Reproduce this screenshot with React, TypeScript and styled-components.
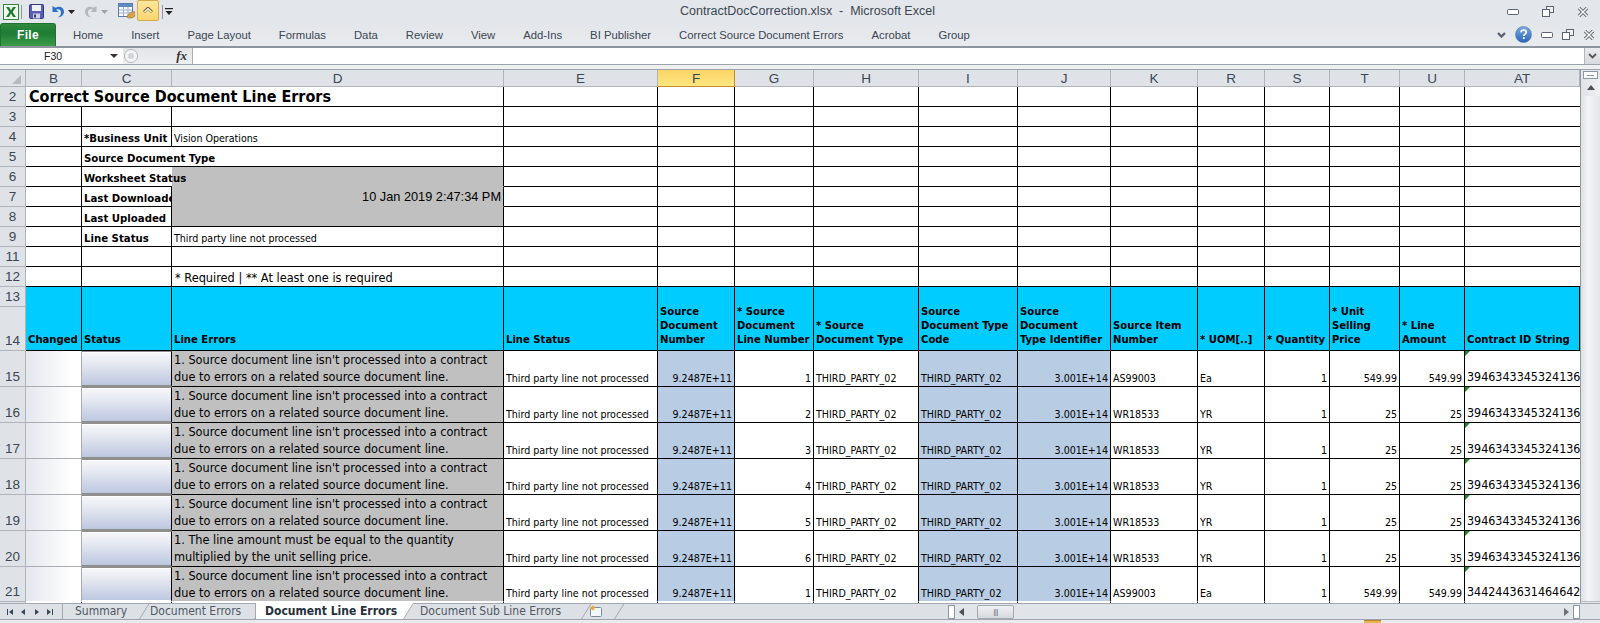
import React from "react";
import styled, { createGlobalStyle } from "styled-components";

const SANS = `"DejaVu Sans Condensed", "Liberation Sans", sans-serif`;
const ARIAL = `"Liberation Sans", Arial, sans-serif`;

const Global = createGlobalStyle`
  html, body { margin: 0; padding: 0; height: 623px; overflow: hidden; background: #e4e7eb; }
  * { box-sizing: border-box; }
`;

const Page = styled.div`
  width: 1600px; height: 623px; display: flex; flex-direction: column; overflow: hidden;
  font-family: ${ARIAL}; color: #000;
`;
const TitleBar = styled.div`
  height: 23px; flex: none; display: flex; align-items: center; position: relative;
  background: #e3e6ea;
`;
const Quick = styled.div`
  display: flex; align-items: center; height: 23px; padding-left: 2px;
`;
const QuickSlot = styled.span<{ $w: number }>`
  width: ${(p) => p.$w}px; height: 23px; display: flex; align-items: center; justify-content: center; flex: none;
`;
const Active = styled.span`
  width: 22px; height: 21px; margin-top: -2px; display: flex; align-items: center; justify-content: center; flex: none;
  border: 1px solid #d9a94a; border-radius: 2px; background: linear-gradient(#fde79c, #fdd66c);
`;
const QSep = styled.span`
  width: 1px; height: 14px; background: #8f979f; flex: none;
`;
const WindowTitle = styled.div`
  position: absolute; left: 680px; top: 4px; font-size: 12.5px; line-height: 15px; color: #3b4654; white-space: pre;
`;
const WindowBtns = styled.div<{ $gap: number }>`
  margin-left: auto; display: flex; align-items: center; gap: ${(p) => p.$gap}px;
`;
const TopControls = styled(WindowBtns)`
  padding-right: 11px;
`;
const RibbonTabs = styled.div`
  height: 25px; flex: none; display: flex; align-items: stretch;
  background: linear-gradient(#e3e6ea, #e9ebee);
  border-bottom: 2px solid #8d969e;
`;
const FileTab = styled.div`
  width: 56px; height: 23px; flex: none; display: flex; align-items: center; justify-content: center;
  color: #fff; font-size: 12px; font-weight: 700; letter-spacing: 0.3px;
  border-radius: 3px 3px 0 0; border: 1px solid #1d7230; border-bottom: none;
  background: linear-gradient(#2f8a3f, #1e7b33 40%, #3b9c4a);
`;
const TabList = styled.div`
  display: flex; align-items: center; padding-left: 17px; gap: 28px; height: 23px;
`;
const Tab = styled.span`
  font-size: 11.3px; color: #3b4654; white-space: nowrap;
`;
const RibbonRight = styled.div`
  margin-left: auto; display: flex; align-items: center; height: 23px; padding-right: 5px; gap: 9px;
`;
const FormulaBar = styled.div`
  height: 17px; flex: none; display: flex; align-items: stretch; background: #fff;
  border-bottom: 1px solid #9da3aa;
`;
const NameBox = styled.div`
  width: 123px; flex: none; display: flex; align-items: center; padding-left: 44px; font-size: 10.5px; color: #222; position: relative;
`;
const NameArrow = styled.span`
  margin-left: auto; margin-right: 5px; width: 0; height: 0;
  border-left: 4px solid transparent; border-right: 4px solid transparent; border-top: 4px solid #333;
`;
const FxBox = styled.div`
  width: 70px; flex: none; display: flex; align-items: center; background: linear-gradient(#e3e5e9, #eceef1);
  border-right: 1px solid #a9aeb5; position: relative;
`;
const FxRound = styled.span`
  width: 14px; height: 14px; margin-left: 1px; border-radius: 50%; border: 1px solid #b4b8be;
  background: radial-gradient(circle, #d4d6da 35%, #f3f4f6 40%);
`;
const FxText = styled.span`
  margin-left: auto; margin-right: 5px; font-family: "Liberation Serif", serif; font-style: italic; font-weight: 700; font-size: 13px; color: #333;
`;
const FormulaInput = styled.div`
  flex: 1;
`;
const FormulaExpand = styled.div`
  width: 16px; flex: none; display: flex; align-items: center; justify-content: center;
  background: linear-gradient(#e9ebee, #d7dade); border-left: 1px solid #b0b5bb;
`;
const Spacer = styled.div`
  height: 5px; flex: none; background: #eef0f2; border-bottom: 1px solid #9da3aa;
`;
const Work = styled.div`
  height: 533px; flex: none; display: flex; overflow: hidden;
`;
const Sheet = styled.div`
  width: 1580px; flex: none; display: grid; overflow: hidden; background: #fff;
  grid-template-columns: 26px 56px 90px 332px 154px 77px 79px 105px 99px 93px 87px 67px 65px 70px 65px 115px;
  grid-template-rows: 17px 20px repeat(10, 20px) 44px repeat(6, 36px) 35px 20px;
  align-content: start;
`;
const Corner = styled.div`
  background: #dfe3e8; border-right: 1px solid #b1b5bb; border-bottom: 1px solid #b1b5bb;
  display: flex; align-items: flex-end; justify-content: flex-end; padding: 0 4px 2px 0;
`;
const ColHead = styled.div<{ $on?: boolean }>`
  display: flex; align-items: center; justify-content: center; font-size: 13.5px; color: #3a4656;
  border-right: 1px solid ${(p) => (p.$on ? "#c58b2f" : "#b1b5bb")};
  border-bottom: 1px solid ${(p) => (p.$on ? "#c58b2f" : "#b1b5bb")};
  background: ${(p) => (p.$on ? "linear-gradient(#fbd566, #ffe680)" : "#dfe3e8")};
`;
const RowHead = styled.div`
  display: flex; align-items: flex-end; justify-content: center; font-size: 13.5px; color: #3a4656; line-height: 18px;
  background: #dfe3e8; border-right: 1px solid #b1b5bb; border-bottom: 1px solid #b1b5bb;
`;
const Cell = styled.div<{ $end?: boolean; $nr?: boolean; $bg?: string; $span?: number; $lineB?: string }>`
  display: flex; align-items: flex-end; padding: 0 2px; position: relative; white-space: nowrap; min-width: 0;
  justify-content: ${(p) => (p.$end ? "flex-end" : "flex-start")};
  background: ${(p) => p.$bg ?? "#fff"};
  border-right: ${(p) => (p.$nr ? "none" : "1px solid #000")};
  border-bottom: 1px solid ${(p) => p.$lineB ?? "#000"};
  ${(p) => (p.$span ? `grid-column: span ${p.$span};` : "")}
`;
const Label = styled(Cell)<{ $over?: boolean }>`
  font-family: ${SANS}; font-size: 11.3px; font-weight: 700; line-height: 15px; padding-left: 2px; padding-bottom: 0;
  overflow: ${(p) => (p.$over ? "visible" : "hidden")}; z-index: ${(p) => (p.$over ? 1 : 0)};
`;
const Small = styled(Cell)`
  font-family: ${SANS}; font-size: 10.6px; line-height: 15px; padding-bottom: 0;
  overflow: hidden;
`;
const Title = styled(Cell)`
  font-family: ${SANS}; font-size: 16px; font-weight: 700; line-height: 19px; padding-left: 3px; align-items: flex-end;
`;
const Note = styled(Cell)`
  font-family: ${SANS}; font-size: 12.65px; padding-left: 3px; line-height: 17px;
`;
const Stamp = styled(Cell)`
  font-size: 12.75px; line-height: 18px;
`;
const HeadCell = styled(Cell)`
  grid-row: span 2; background: #00ccff; font-family: ${SANS}; font-size: 11.2px; font-weight: 700;
  line-height: 14px; white-space: pre-line; padding: 0 2px 3px 2px;
`;
const ChangedCell = styled(Cell)`
  background: linear-gradient(90deg, #e5e7ee, #fff 85%);
  border-right: 1px solid #a9adb3; border-bottom: 1px solid ${(p) => p.$lineB ?? "#a9adb3"};
`;
const StatusCell = styled(Cell)`
  padding: 0; border-top: 1px solid #8f8f8f; border-bottom: 2px solid ${(p) => p.$lineB ?? "#8f8f8f"};
  background: linear-gradient(#f8f8fb, #e6e9f1 35%, #bcc7e0);
  box-shadow: inset 0 1px 0 #fff;
`;
const ErrorCell = styled(Cell)`
  background: #c0c0c0; font-family: ${SANS}; font-size: 12.6px; line-height: 17px; white-space: pre-line;
  align-items: flex-start; padding-top: 0;
`;
const IdCell = styled(Cell)`
  font-family: ${SANS}; font-size: 12.4px; line-height: 18px; overflow: hidden; border-right: none; padding-left: 2px;
`;
const Flag = styled.span`
  position: absolute; left: 0; top: 0; width: 0; height: 0;
  border-top: 5px solid #178a1c; border-right: 5px solid transparent;
`;
const VScroll = styled.div`
  width: 20px; flex: none; display: flex; flex-direction: column; align-items: stretch;
  background: #e4e7eb; border-left: 1px solid #9299a1;
`;
const SplitV = styled.div`
  height: 8px; margin: 1px 2px 0; flex: none; background: #fff; border: 1px solid #8f969d;
  display: flex; align-items: center; justify-content: center;
`;
const SplitDash = styled.span`
  width: 7px; height: 1px; background: #8f969d;
`;
const ArrowBtn = styled.div`
  height: 17px; flex: none; display: flex; align-items: center; justify-content: center;
  background: linear-gradient(90deg, #dfe2e7, #eef0f3);
`;
const Up = styled.span`
  width: 0; height: 0; border-left: 4px solid transparent; border-right: 4px solid transparent; border-bottom: 5px solid #4a5056;
`;
const VThumb = styled.div`
  flex: 1; margin-bottom: 1px; background: linear-gradient(90deg, #dde0e6, #f3f4f6 40%, #e3e5ea);
  border-bottom: 1px solid #b9bdc3;
`;
const TabStrip = styled.div`
  height: 17px; flex: none; display: flex; align-items: stretch; background: #dde0e5; border-top: 1px solid #a3a9b0;
  border-bottom: 1px solid #9ea4ab;
`;
const Nav = styled.div`
  width: 63px; flex: none; display: flex; align-items: center; justify-content: space-around; padding: 0 5px 0 3px; color: #3a4656;
  border-right: 1px solid #a3a9b0;
`;
const SheetTabs = styled.div`
  width: 885px; flex: none; display: flex; align-items: stretch; margin-top: -1px;
`;
const SheetTab = styled.span<{ $on?: boolean; $w: number; $pad: number }>`
  width: ${(p) => p.$w}px; flex: none; padding-left: ${(p) => p.$pad}px; display: flex; align-items: center; position: relative;
  font-family: ${SANS}; font-size: 12px; white-space: nowrap;
  font-weight: ${(p) => (p.$on ? 700 : 400)}; color: ${(p) => (p.$on ? "#26303c" : "#4e5965")};
  background: ${(p) => (p.$on ? "#fff" : "transparent")};
  border-left: ${(p) => (p.$on ? "1px solid #a3a9b0" : "none")};
  &::after {
    content: ""; position: absolute; right: -5px; top: 0; bottom: 0; width: 10px;
    transform: skewX(-32deg); z-index: ${(p) => (p.$on ? 1 : 0)};
    background: ${(p) => (p.$on ? "#fff" : "transparent")};
    border-right: 1px solid #a3a9b0;
  }
`;
const TabLabel = styled.span`
  position: relative; z-index: 2;
`;
const HScroll = styled.div`
  flex: 1; display: flex; align-items: center; background: #e1e4e8;
`;
const SplitH = styled.span`
  width: 7px; height: 14px; margin-left: 0; background: #fff; border: 1px solid #8f969d; flex: none;
`;
const HThumb = styled.span`
  width: 37px; height: 14px; flex: none; margin-left: 13px; border: 1px solid #a4a9b0; border-radius: 2px;
  background: linear-gradient(#f0f1f4, #d6d9de); display: flex; align-items: center; justify-content: center;
  font-size: 8px; color: #6a7078; letter-spacing: -0.5px;
`;
const ArrowL = styled.span`
  margin-left: 4px; width: 0; height: 0; border-top: 4px solid transparent; border-bottom: 4px solid transparent; border-right: 5px solid #4a5056;
`;
const ArrowR = styled.span`
  margin-left: auto; margin-right: 4px; width: 0; height: 0; border-top: 4px solid transparent; border-bottom: 4px solid transparent; border-left: 5px solid #6a7078;
`;
const EndSplit = styled(SplitH)`
  margin-right: 20px;
`;
const StatusBar = styled.div`
  flex: 1; background: #e9ebee; display: flex; align-items: flex-start;
`;
const StatusOn = styled.span`
  margin-left: 1364px; width: 17px; height: 3px; background: #f2b44a; border-top: 1px solid #b5842e;
`;

const ExcelIcon = () => (
  <svg width="16" height="16" viewBox="0 0 16 16">
    <rect x="0.5" y="0.5" width="15" height="15" fill="#f2f7ee" stroke="#2d8a3c" />
    <path d="M3 3h3l2 3.3L10 3h3l-3.4 5L13 13h-3l-2-3.4L6 13H3l3.4-5z" fill="#1f7d30" />
  </svg>
);
const SaveIcon = () => (
  <svg width="15" height="15" viewBox="0 0 15 15">
    <rect x="0.5" y="0.5" width="14" height="14" rx="1" fill="#5a5fb4" stroke="#34387e" />
    <rect x="3" y="1" width="9" height="6" fill="#eef0fa" />
    <rect x="4" y="9.5" width="7" height="5" fill="#cfd2e6" />
    <rect x="5" y="10.5" width="2" height="3" fill="#34387e" />
  </svg>
);
const UndoIcon = ({ c, flip }: { c: string; flip?: boolean }) => (
  <svg width="14" height="15" viewBox="0 0 14 15" style={flip ? { transform: "scaleX(-1)" } : undefined}>
    <path d="M1.5 2v6h6L5.2 5.8C7.5 4.6 10 6 10 8.5c0 2-1 3.5-3 5 4-.7 6-3 6-5.8 0-4-4.6-6.3-8.4-3.9z" fill={c} />
  </svg>
);
const Drop = ({ c }: { c: string }) => (
  <svg width="7" height="4" viewBox="0 0 7 4"><path d="M0 0h7L3.5 4z" fill={c} /></svg>
);
const TableIcon = () => (
  <svg width="18" height="17" viewBox="0 0 18 17">
    <rect x="0.5" y="0.5" width="14" height="13" fill="#f8fafd" stroke="#5b7ba8" />
    <rect x="1" y="1" width="13" height="3" fill="#5d8ac4" />
    <path d="M1 7h13M1 10h13M5.5 4v9M10 4v9" stroke="#9db4d2" />
    <path d="M10 12c2-3 5-4 7-3l-1 2 1 2c-2 2-6 3-8 1z" fill="#d9a441" stroke="#8d6a22" strokeWidth="0.6" />
  </svg>
);
const ChevronUp = () => (
  <svg width="10" height="7" viewBox="0 0 10 7">
    <path d="M1 5l4-4 4 4" fill="none" stroke="#6a5a2a" strokeWidth="2.6" />
    <path d="M1.4 5L5 1.6 8.6 5" fill="none" stroke="#fff" strokeWidth="1.2" />
  </svg>
);
const Customize = () => (
  <svg width="8" height="8" viewBox="0 0 8 8">
    <rect x="0" y="0" width="8" height="1.2" fill="#222" /><path d="M0.5 3h7L4 7z" fill="#222" />
  </svg>
);
const Min = () => (
  <svg width="12" height="6" viewBox="0 0 12 6"><rect x="0.5" y="0.5" width="11" height="5" rx="1" fill="#fff" stroke="#5a6470" /></svg>
);
const Restore = () => (
  <svg width="12" height="11" viewBox="0 0 12 11">
    <rect x="4.5" y="0.5" width="7" height="6" fill="#eef0f2" stroke="#5a6470" />
    <rect x="0.5" y="3.5" width="7" height="7" fill="#fff" stroke="#5a6470" />
  </svg>
);
const CloseX = () => (
  <svg width="12" height="10" viewBox="0 0 12 10">
    <path d="M2 1l8 8M10 1L2 9" stroke="#5a6470" strokeWidth="3.2" />
    <path d="M2 1l8 8M10 1L2 9" stroke="#fff" strokeWidth="1.4" />
  </svg>
);
const Heart = () => (
  <svg width="9" height="7" viewBox="0 0 9 7">
    <path d="M1 2l3.5 3.5L8 2" fill="none" stroke="#5a6470" strokeWidth="2.4" />
  </svg>
);
const Help = () => (
  <svg width="17" height="17" viewBox="0 0 17 17">
    <defs><linearGradient id="hg" x1="0" y1="0" x2="0" y2="1"><stop offset="0" stopColor="#7ea8de" /><stop offset="1" stopColor="#2a66b8" /></linearGradient></defs>
    <circle cx="8.5" cy="8.5" r="8" fill="url(#hg)" stroke="#4a76b0" strokeWidth="0.6" />
    <path d="M6 6.3C6.2 4.8 7.2 4.2 8.6 4.2c1.6 0 2.6.9 2.6 2.1 0 1.1-.7 1.6-1.5 2.1-.7.4-.9.8-.9 1.5" fill="none" stroke="#fff" strokeWidth="1.7" />
    <rect x="7.9" y="11.2" width="1.8" height="1.8" fill="#fff" />
  </svg>
);
const CornerTri = () => (
  <svg width="9" height="9" viewBox="0 0 9 9"><path d="M9 0v9H0z" fill="#b6bbc2" /></svg>
);
const ExpandChev = () => (
  <svg width="9" height="6" viewBox="0 0 9 6"><path d="M1 1l3.5 3.5L8 1" fill="none" stroke="#555" strokeWidth="1.8" /></svg>
);
const NavIcon = ({ d }: { d: string }) => (
  <svg width="8" height="8" viewBox="0 0 8 8"><path d={d} fill="#3a4656" /></svg>
);
const NewSheet = () => (
  <svg width="16" height="14" viewBox="0 0 16 14">
    <rect x="2.5" y="3.5" width="11" height="9" rx="1" fill="#f3f6fb" stroke="#7b8da6" />
    <path d="M4 1l1 1.4L6.6 1.6 6 3.2 7.6 4 6 4.6l.6 1.6L5 5.4 4 6.8 3.4 5 1.6 4.8 3 4 2 2.4l1.8.6z" fill="#e8a93a" />
  </svg>
);

const SRC = "1. Source document line isn't processed into a contract\ndue to errors on a related source document line.";
const AMT = "1. The line amount must be equal to the quantity\nmultiplied by the unit selling price.";
const LINE = "Third party line not processed";

type Row = { n: number; err: string; line: number; item: string; uom: string; price: string; amt: string; id: string };
const A = "3946343345324136";
const rows: Row[] = [
  { n: 15, err: SRC, line: 1, item: "AS99003", uom: "Ea", price: "549.99", amt: "549.99", id: A },
  { n: 16, err: SRC, line: 2, item: "WR18533", uom: "YR", price: "25", amt: "25", id: A },
  { n: 17, err: SRC, line: 3, item: "WR18533", uom: "YR", price: "25", amt: "25", id: A },
  { n: 18, err: SRC, line: 4, item: "WR18533", uom: "YR", price: "25", amt: "25", id: A },
  { n: 19, err: SRC, line: 5, item: "WR18533", uom: "YR", price: "25", amt: "25", id: A },
  { n: 20, err: AMT, line: 6, item: "WR18533", uom: "YR", price: "25", amt: "35", id: A },
  { n: 21, err: SRC, line: 1, item: "AS99003", uom: "Ea", price: "549.99", amt: "549.99", id: "3442443631464642" },
];
const letters = ["B", "C", "D", "E", "F", "G", "H", "I", "J", "K", "R", "S", "T", "U", "AT"];
const heads = [
  "Changed", "Status", "Line Errors", "Line Status", "Source\nDocument\nNumber", "* Source\nDocument\nLine Number",
  "* Source\nDocument Type", "Source\nDocument Type\nCode", "Source\nDocument\nType Identifier", "Source Item\nNumber",
  "* UOM[..]", "* Quantity", "* Unit\nSelling\nPrice", "* Line\nAmount", "Contract ID String",
];
const BLUE = "#b8cce4";
const GRAY = "#c0c0c0";

const Blanks = ({ k }: { k: string }) => (
  <>
    {letters.slice(3).map((l, i) => (
      i === 11 ? <Cell key={k + l} $nr /> : <Cell key={k + l} />
    ))}
  </>
);

const topRows: { n: number; c?: React.ReactNode; d?: React.ReactNode }[] = [
  { n: 3 },
  { n: 4, c: <Label>*Business Unit</Label>, d: <Small>Vision Operations</Small> },
  { n: 5, c: <Label $over $nr>Source Document Type</Label>, d: <Cell /> },
  { n: 6, c: <Label $over $nr>Worksheet Status</Label>, d: <Cell $bg={GRAY} $lineB={GRAY} /> },
  { n: 7, c: <Label>Last Downloaded</Label>, d: <Stamp $bg={GRAY} $lineB={GRAY} $end>10 Jan 2019 2:47:34 PM</Stamp> },
  { n: 8, c: <Label>Last Uploaded</Label>, d: <Cell $bg={GRAY} /> },
  { n: 9, c: <Label>Line Status</Label>, d: <Small>{LINE}</Small> },
  { n: 11 },
  { n: 12, d: <Note>* Required | ** At least one is required</Note> },
];

export default function App() {
  return (
    <Page>
      <Global />
      <TitleBar>
        <Quick>
          <QuickSlot $w={18}><ExcelIcon /></QuickSlot>
          <QuickSlot $w={2}><QSep /></QuickSlot>
          <QuickSlot $w={6} />
          <QuickSlot $w={16}><SaveIcon /></QuickSlot>
          <QuickSlot $w={6} />
          <QuickSlot $w={15}><UndoIcon c="#2a72c8" /></QuickSlot>
          <QuickSlot $w={13}><Drop c="#222" /></QuickSlot>
          <QuickSlot $w={6} />
          <QuickSlot $w={14}><UndoIcon c="#b4b9bf" flip /></QuickSlot>
          <QuickSlot $w={12}><Drop c="#a0a5ab" /></QuickSlot>
          <QuickSlot $w={6} />
          <QuickSlot $w={21}><TableIcon /></QuickSlot>
          <Active><ChevronUp /></Active>
          <QuickSlot $w={3} />
          <QuickSlot $w={1}><QSep /></QuickSlot>
          <QuickSlot $w={12}><Customize /></QuickSlot>
        </Quick>
        <WindowTitle>ContractDocCorrection.xlsx  -  Microsoft Excel</WindowTitle>
        <TopControls $gap={23}><Min /><Restore /><CloseX /></TopControls>
      </TitleBar>
      <RibbonTabs>
        <FileTab>File</FileTab>
        <TabList>
          {["Home", "Insert", "Page Layout", "Formulas", "Data", "Review", "View", "Add-Ins", "BI Publisher", "Correct Source Document Errors", "Acrobat", "Group"].map((t) => (
            <Tab key={t}>{t}</Tab>
          ))}
        </TabList>
        <RibbonRight><Heart /><Help /><Min /><Restore /><CloseX /></RibbonRight>
      </RibbonTabs>
      <FormulaBar>
        <NameBox>F30<NameArrow /></NameBox>
        <FxBox><FxRound /><FxText>fx</FxText></FxBox>
        <FormulaInput />
        <FormulaExpand><ExpandChev /></FormulaExpand>
      </FormulaBar>
      <Spacer />
      <Work>
        <Sheet>
          <Corner><CornerTri /></Corner>
          {letters.map((l) => <ColHead key={l} $on={l === "F"}>{l}</ColHead>)}

          <RowHead>2</RowHead>
          <Title $span={3}>Correct Source Document Line Errors</Title>
          <Blanks k="r2" />

          {topRows.map((r) => (
            <React.Fragment key={r.n}>
              <RowHead>{r.n}</RowHead>
              <Cell />
              {r.c ?? <Cell />}
              {r.d ?? <Cell />}
              <Blanks k={`r${r.n}`} />
            </React.Fragment>
          ))}

          <RowHead>13</RowHead>
          {heads.map((h) => <HeadCell key={h}>{h}</HeadCell>)}
          <RowHead>14</RowHead>

          {rows.map((r) => {
            const end = r.n === 21 ? "#fff" : undefined;
            return (
              <React.Fragment key={r.n}>
                <RowHead>{r.n}</RowHead>
                <ChangedCell $lineB={end} />
                <StatusCell $lineB={end} />
                <ErrorCell $lineB={end}>{r.err}</ErrorCell>
                <Small $lineB={end}>{LINE}</Small>
                <Small $lineB={end} $bg={BLUE} $end>9.2487E+11</Small>
                <Small $lineB={end} $end>{r.line}</Small>
                <Small $lineB={end}>THIRD_PARTY_02</Small>
                <Small $lineB={end} $bg={BLUE}>THIRD_PARTY_02</Small>
                <Small $lineB={end} $bg={BLUE} $end>3.001E+14</Small>
                <Small $lineB={end}>{r.item}</Small>
                <Small $lineB={end}>{r.uom}</Small>
                <Small $lineB={end} $end>1</Small>
                <Small $lineB={end} $end>{r.price}</Small>
                <Small $lineB={end} $end>{r.amt}</Small>
                <IdCell $lineB={end}><Flag />{r.id}</IdCell>
              </React.Fragment>
            );
          })}
          <RowHead />
          <Cell /><Cell /><Cell />
          <Blanks k="r22" />
        </Sheet>
        <VScroll>
          <SplitV><SplitDash /></SplitV>
          <ArrowBtn><Up /></ArrowBtn>
          <VThumb />
        </VScroll>
      </Work>
      <TabStrip>
        <Nav>
          <NavIcon d="M1 1h1v6H1zM7 1v6L3 4z" />
          <NavIcon d="M6 1v6L2 4z" />
          <NavIcon d="M2 1v6l4-3z" />
          <NavIcon d="M7 1h-1v6h1zM1 1v6l4-3z" />
        </Nav>
        <SheetTabs>
          <SheetTab $w={77} $pad={12}><TabLabel>Summary</TabLabel></SheetTab>
          <SheetTab $w={115} $pad={10}><TabLabel>Document Errors</TabLabel></SheetTab>
          <SheetTab $on $w={149} $pad={9}><TabLabel>Document Line Errors</TabLabel></SheetTab>
          <SheetTab $w={178} $pad={16}><TabLabel>Document Sub Line Errors</TabLabel></SheetTab>
          <SheetTab $w={33} $pad={6}><NewSheet /></SheetTab>
        </SheetTabs>
        <HScroll>
          <SplitH />
          <ArrowL />
          <HThumb>|||</HThumb>
          <ArrowR />
          <EndSplit />
        </HScroll>
      </TabStrip>
      <StatusBar><StatusOn /></StatusBar>
    </Page>
  );
}
